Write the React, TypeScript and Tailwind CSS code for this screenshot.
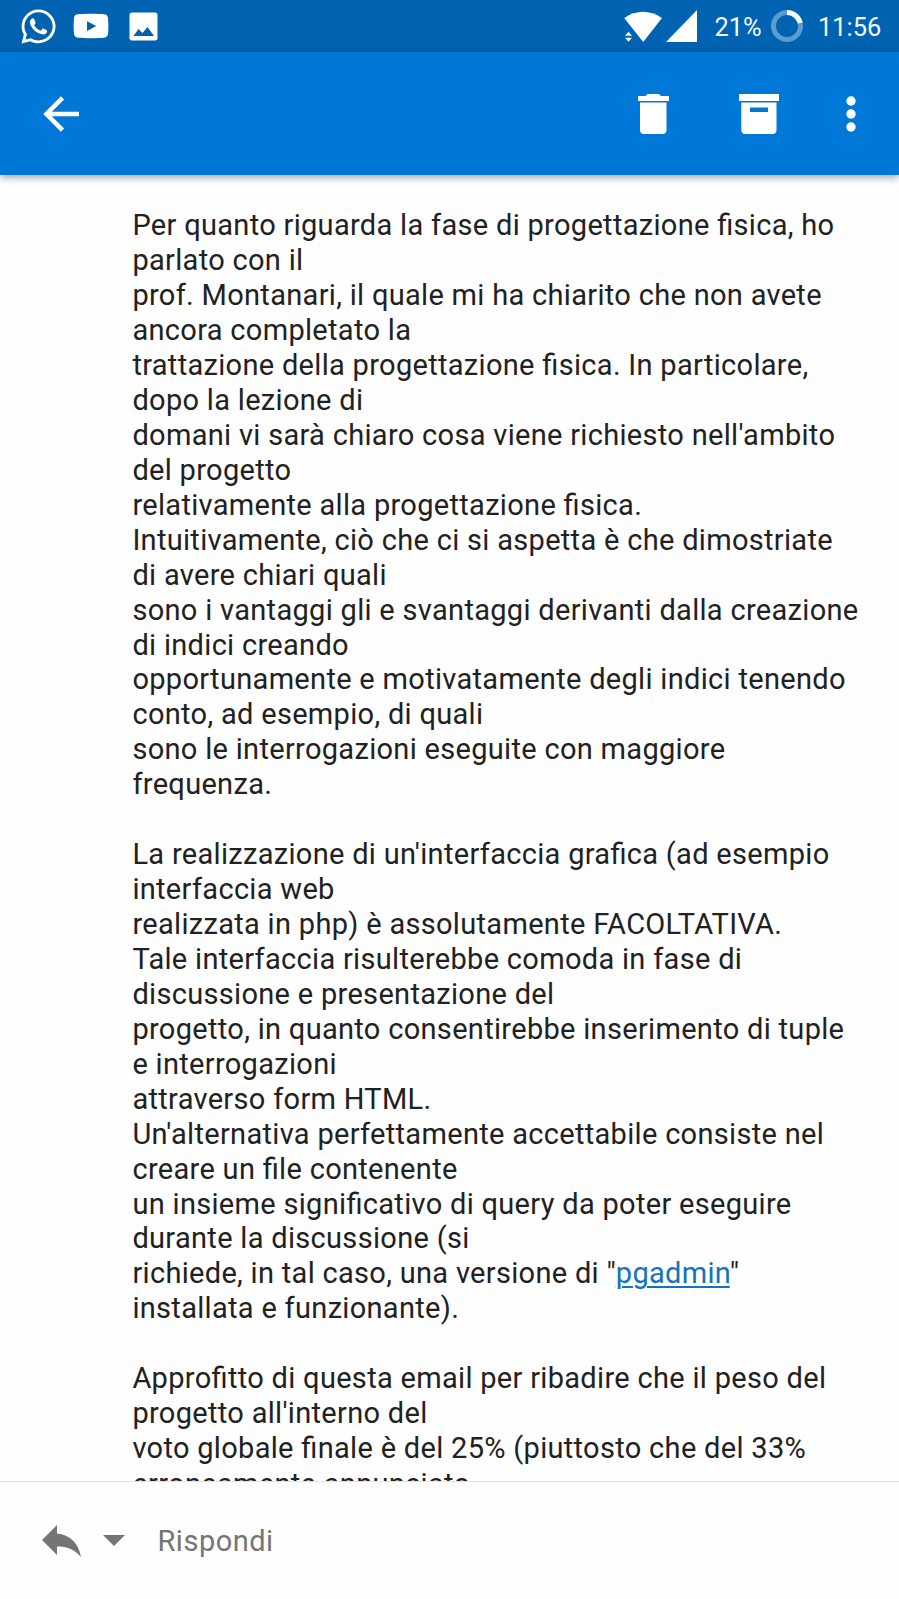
import { FaWhatsapp } from "react-icons/fa6";

const before = [
  "Per quanto riguarda la fase di progettazione fisica, ho",
  "parlato con il",
  "prof. Montanari, il quale mi ha chiarito che non avete",
  "ancora completato la",
  "trattazione della progettazione fisica. In particolare,",
  "dopo la lezione di",
  "domani vi sarà chiaro cosa viene richiesto nell'ambito",
  "del progetto",
  "relativamente alla progettazione fisica.",
  "Intuitivamente, ciò che ci si aspetta è che dimostriate",
  "di avere chiari quali",
  "sono i vantaggi gli e svantaggi derivanti dalla creazione",
  "di indici creando",
  "opportunamente e motivatamente degli indici tenendo",
  "conto, ad esempio, di quali",
  "sono le interrogazioni eseguite con maggiore",
  "frequenza.",
  "",
  "La realizzazione di un'interfaccia grafica (ad esempio",
  "interfaccia web",
  "realizzata in php) è assolutamente FACOLTATIVA.",
  "Tale interfaccia risulterebbe comoda in fase di",
  "discussione e presentazione del",
  "progetto, in quanto consentirebbe inserimento di tuple",
  "e interrogazioni",
  "attraverso form HTML.",
  "Un'alternativa perfettamente accettabile consiste nel",
  "creare un file contenente",
  "un insieme significativo di query da poter eseguire",
  "durante la discussione (si",
];

const after = [
  "installata e funzionante).",
  "",
  "Approfitto di questa email per ribadire che il peso del",
  "progetto all'interno del",
  "voto globale finale è del 25% (piuttosto che del 33%",
];

function Line({ text }: { text: string }) {
  return <p className="h-[34.95px]">{text}</p>;
}

function StatusBar() {
  return (
    <div className="flex h-[52px] shrink-0 items-center bg-[#0063b1] pl-[19px] pr-[17px] text-white">
      <FaWhatsapp className="size-[39px]" />
      <svg className="ml-[15px] h-[26px] w-[36px]" viewBox="0 0 36 26" fill="currentColor">
        <path
          fillRule="evenodd"
          d="M5 1.3C12 .6 24 .6 31 1.3Q34.6 1.6 35 5C35.5 10 35.5 16 35 21Q34.6 24.4 31 24.7C24 25.3 12 25.3 5 24.7Q1.4 24.4 1 21C.5 16 .5 10 1 5Q1.4 1.6 5 1.3ZM14 8.3V18L23.3 13.1Z"
        />
      </svg>
      <svg className="ml-[20px] h-[29px] w-[29px]" viewBox="0 0 29 29" fill="currentColor">
        <path
          fillRule="evenodd"
          d="M3 .5H26Q28.5 .5 28.5 3V26Q28.5 28.5 26 28.5H3Q.5 28.5 .5 26V3Q.5 .5 3 .5ZM4.500 24H25L18.500 15L13.500 21L9.500 17Z"
        />
      </svg>
      <div className="flex-1" />
      <svg className="h-[33px] w-[38px]" viewBox="0 0 38 33" fill="currentColor">
        <path d="M.2 8Q19-4.500 38 8L19.200 32Z" />
        <path d="M1 25.800L4.500 21.800L8 25.800ZM1 27.700H8L4.500 31.700Z" />
      </svg>
      <svg className="ml-[4px] h-[32px] w-[31px]" viewBox="0 0 31 32" fill="currentColor">
        <path d="M31 0V32H0Z" />
      </svg>
      <span className="ml-[18px] w-[47px] whitespace-nowrap pt-[2px] text-[25.4px] leading-8 text-[#f2f9ff]">21%</span>
      <svg className="ml-[9.5px] size-[32px]" viewBox="0 0 32 32" fill="none" strokeWidth="5">
        <circle cx="16" cy="16" r="13.5" className="stroke-[#5b9bd0]" />
        <path d="M16 2.500A13.500 13.500 0 0 1 29.200 13" className="stroke-white" />
      </svg>
      <span className="ml-[15px] w-[64px] whitespace-nowrap pt-[2px] text-[25.4px] leading-8 text-[#f2f9ff]">11:56</span>
    </div>
  );
}

function AppBar() {
  return (
    <header className="z-10 flex h-[123px] shrink-0 items-center bg-[#0078d7] pl-[43px] pr-[43px] text-white shadow-[0_2px_8px_rgba(0,0,0,0.4)]">
      <button aria-label="Indietro">
        <svg className="h-[36px] w-[37px]" viewBox="0 0 37 36" fill="none" stroke="currentColor" strokeWidth="4.6">
          <path d="M19.500 1.800L3.500 18L19.500 34.200M3.500 18H36" />
        </svg>
      </button>
      <div className="flex-1" />
      <button aria-label="Elimina">
        <svg className="h-[40px] w-[31px]" viewBox="0 0 31 40" fill="currentColor">
          <path d="M0 2H7.500L9.500 0H21L23 2H31V7H0ZM2 8.500H28.500V36Q28.500 40 24.500 40H6Q2 40 2 36Z" />
        </svg>
      </button>
      <button aria-label="Archivia" className="ml-[70px]">
        <svg className="h-[40px] w-[40px]" viewBox="0 0 40 40" fill="currentColor">
          <path
            fillRule="evenodd"
            d="M0 0H40V7H0ZM2.300 8.500H37.500V36Q37.500 40 33.500 40H6.300Q2.300 40 2.300 36ZM11 13.500V18H29V13.500Z"
          />
        </svg>
      </button>
      <button aria-label="Altro" className="ml-[67px]">
        <svg className="h-[36px] w-[10px]" viewBox="0 0 10 36" fill="currentColor">
          <circle cx="5" cy="5" r="4.7" />
          <circle cx="5" cy="18" r="4.7" />
          <circle cx="5" cy="31" r="4.7" />
        </svg>
      </button>
    </header>
  );
}

function ReplyBar() {
  return (
    <footer className="flex h-[118px] shrink-0 items-center border-t border-[#e3e3e3] bg-[#fefefe] pl-[42px] text-[#757575]">
      <svg className="h-[32px] w-[39px]" viewBox="0 0 39 32" fill="currentColor">
        <path d="M15 0V8.500C28 9.500 36.500 18 39 32C32 24 25 21.500 15 21.500V30L0 15Z" />
      </svg>
      <svg className="ml-[22px] h-[11px] w-[22px]" viewBox="0 0 22 11" fill="currentColor">
        <path d="M0 0H22L11 11Z" />
      </svg>
      <span className="ml-[32.5px] pt-px text-[29px] leading-[34px] tracking-[0.5px]">Rispondi</span>
    </footer>
  );
}

export default function App() {
  return (
    <div className="flex h-[1599px] w-[899px] flex-col overflow-hidden bg-[#fefefe] font-[Roboto,sans-serif]">
      <StatusBar />
      <AppBar />
      <main className="min-h-0 flex-1 overflow-hidden whitespace-nowrap pl-[132.4px] pt-[33.3px] text-[29px] leading-[34.95px] tracking-[0.31px] text-[#212121] [font-feature-settings:'liga']">
        {before.map((text, i) => (
          <Line key={i} text={text} />
        ))}
        <p className="h-[34.95px]">
          richiede, in tal caso, una versione di "
          <a href="#" className="text-[#1274bc] underline decoration-2 underline-offset-[3px]">
            pgadmin
          </a>
          "
        </p>
        {after.map((text, i) => (
          <Line key={i} text={text} />
        ))}
        <p className="pt-px">erroneamente annunciato</p>
      </main>
      <ReplyBar />
    </div>
  );
}
